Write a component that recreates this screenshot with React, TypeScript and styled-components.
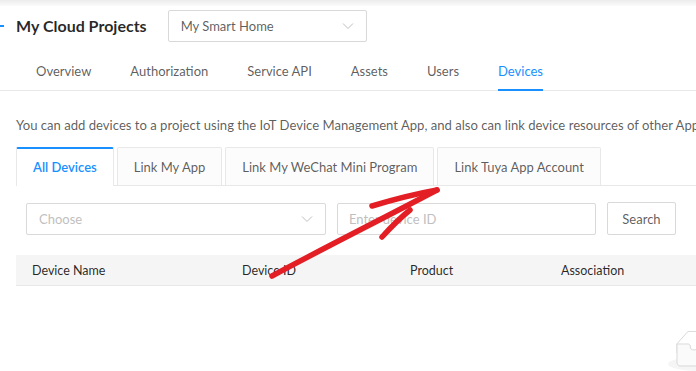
import styled, { createGlobalStyle } from "styled-components";

const GlobalStyle = createGlobalStyle`
  html, body {
    margin: 0;
    padding: 0;
    background: #ffffff;
    overflow: hidden;
  }
  body {
    font-family: "Lato", "Noto Sans", sans-serif;
    color: rgba(0, 0, 0, 0.65);
  }
`;

const Page = styled.div`
  position: relative;
  width: 696px;
  height: 371px;
  overflow: hidden;
  background: #ffffff;
`;

const TopShade = styled.div`
  height: 6px;
  background: linear-gradient(#ececec, #fbfbfb);
`;

const Header = styled.div`
  display: flex;
  align-items: center;
  height: 39px;
`;

const Dash = styled.span`
  width: 4px;
  height: 2px;
  background: #1890ff;
  margin-right: 12px;
  margin-top: 1px;
`;

const Title = styled.h1`
  margin: 0;
  font-size: 16px;
  font-weight: 700;
  color: rgba(0, 0, 0, 0.85);
  margin-right: 21px;
`;

const SelectBox = styled.div<{ $width: number }>`
  box-sizing: border-box;
  display: flex;
  align-items: center;
  justify-content: space-between;
  width: ${(p) => p.$width}px;
  height: 32px;
  padding: 0 12px;
  border: 1px solid #d9d9d9;
  border-radius: 2px;
  background: #fff;
  font-size: 13px;
`;

const SelectText = styled.span<{ $placeholder?: boolean }>`
  color: ${(p) => (p.$placeholder ? "#bfbfbf" : "rgba(0,0,0,0.65)")};
`;

const Chevron = () => (
  <svg width="12" height="12" viewBox="0 0 12 12">
    <path d="M1 3.5 L6 8.5 L11 3.5" fill="none" stroke="#bfbfbf" strokeWidth="1" />
  </svg>
);

const Nav = styled.div`
  display: flex;
  gap: 39px;
  padding-left: 36px;
  margin-top: 7px;
  border-bottom: 1px solid #e8e8e8;
`;

const NavItem = styled.div<{ $active?: boolean }>`
  font-size: 13px;
  height: 39px;
  line-height: 39px;
  box-sizing: border-box;
  color: ${(p) => (p.$active ? "#1890ff" : "rgba(0,0,0,0.65)")};
  border-bottom: 2px solid ${(p) => (p.$active ? "#1890ff" : "transparent")};
  margin-bottom: -1px;
`;

const Content = styled.div`
  padding-left: 16px;
`;

const Description = styled.p`
  margin: 24px 0 0;
  font-size: 13.1px;
  line-height: 20px;
  white-space: nowrap;
  color: rgba(0, 0, 0, 0.65);
`;

const Tabs = styled.div`
  display: flex;
  gap: 3px;
  margin-top: 12px;
  border-bottom: 1px solid #e8e8e8;
`;

const Tab = styled.div<{ $active?: boolean }>`
  box-sizing: border-box;
  height: 38px;
  line-height: 38px;
  padding: 0 16px;
  font-size: 13px;
  border: 1px solid #e8e8e8;
  border-bottom: none;
  border-radius: 2px 2px 0 0;
  background: ${(p) => (p.$active ? "#fff" : "#fcfcfc")};
  color: ${(p) => (p.$active ? "#1890ff" : "rgba(0,0,0,0.65)")};
  font-weight: ${(p) => (p.$active ? 600 : 400)};
  ${(p) =>
    p.$active &&
    `border-top: 2px solid #1890ff; margin-bottom: -1px; height: 39px; line-height: 37px;`}
`;

const Filters = styled.div`
  display: flex;
  align-items: center;
  gap: 11px;
  padding-left: 10px;
  margin-top: 16px;
`;

const Input = styled.div`
  box-sizing: border-box;
  width: 259px;
  height: 32px;
  line-height: 30px;
  padding: 0 11px;
  border: 1px solid #d9d9d9;
  border-radius: 2px;
  font-size: 13px;
  color: #bfbfbf;
`;

const Button = styled.button`
  box-sizing: border-box;
  width: 69px;
  height: 33px;
  padding: 0;
  border: 1px solid #d9d9d9;
  border-radius: 2px;
  background: #fff;
  font-family: inherit;
  font-size: 13px;
  color: rgba(0, 0, 0, 0.65);
`;

const TableHead = styled.div`
  display: grid;
  grid-template-columns: 210px 168px 151px 1fr;
  margin-top: 20px;
  height: 30px;
  align-items: center;
  padding-left: 16px;
  background: #f5f5f5;
  border-bottom: 1px solid #e8e8e8;
  font-size: 12.5px;
  color: rgba(0, 0, 0, 0.85);
`;

const EmptyIcon = styled.svg`
  position: absolute;
  left: 668px;
  top: 331px;
`;

const Annotation = styled.svg`
  position: absolute;
  left: 0;
  top: 0;
  pointer-events: none;
`;

export default function App() {
  return (
    <Page>
      <GlobalStyle />
      <TopShade />
      <Header>
        <Dash />
        <Title>My Cloud Projects</Title>
        <SelectBox $width={199}>
          <SelectText>My Smart Home</SelectText>
          <Chevron />
        </SelectBox>
      </Header>
      <Nav>
        <NavItem>Overview</NavItem>
        <NavItem>Authorization</NavItem>
        <NavItem>Service API</NavItem>
        <NavItem>Assets</NavItem>
        <NavItem>Users</NavItem>
        <NavItem $active>Devices</NavItem>
      </Nav>
      <Content>
        <Description>
          You can add devices to a project using the IoT Device Management App, and also can link device
          resources of other Apps
        </Description>
        <Tabs>
          <Tab $active>All Devices</Tab>
          <Tab>Link My App</Tab>
          <Tab>Link My WeChat Mini Program</Tab>
          <Tab>Link Tuya App Account</Tab>
        </Tabs>
        <Filters>
          <SelectBox $width={300}>
            <SelectText $placeholder>Choose</SelectText>
            <Chevron />
          </SelectBox>
          <Input>Enter device ID</Input>
          <Button>Search</Button>
        </Filters>
        <TableHead>
          <span>Device Name</span>
          <span>Device ID</span>
          <span>Product</span>
          <span>Association</span>
        </TableHead>
      </Content>
      <EmptyIcon width="64" height="41" viewBox="0 0 64 41">
        <ellipse cx="32" cy="33" rx="32" ry="7" fill="#f5f5f5" />
        <g fill="none" stroke="#d9d9d9">
          <path d="M55 12.76L44.85 1.26A2.5 2.5 0 0 0 43 .4H21a2.5 2.5 0 0 0-1.85.86L9 12.76V22h46v-9.24z" />
          <path
            d="M41.61 15.93c0-1.6 1-2.930 2.24-2.93H55v18.14C55 33.26 53.68 35 52.05 35h-40.1C10.32 35 9 33.26 9 31.14V13h11.16c1.23 0 2.23 1.32 2.23 2.92v.03c0 1.6 1.01 2.9 2.24 2.9h14.74c1.23 0 2.24-1.31 2.24-2.910z"
            fill="#fafafa"
          />
        </g>
      </EmptyIcon>
      <Annotation width="696" height="371" viewBox="0 0 696 371">
        <g fill="none" stroke="#e31e24" strokeWidth="5.5" strokeLinecap="round" strokeLinejoin="round">
          <path d="M272 276 C 320 250, 380 220, 437 190" />
          <path d="M372 206 C 395 199, 415 194, 437 190" />
          <path d="M382 237 C 392 226, 400 218, 410 210" />
        </g>
      </Annotation>
    </Page>
  );
}
